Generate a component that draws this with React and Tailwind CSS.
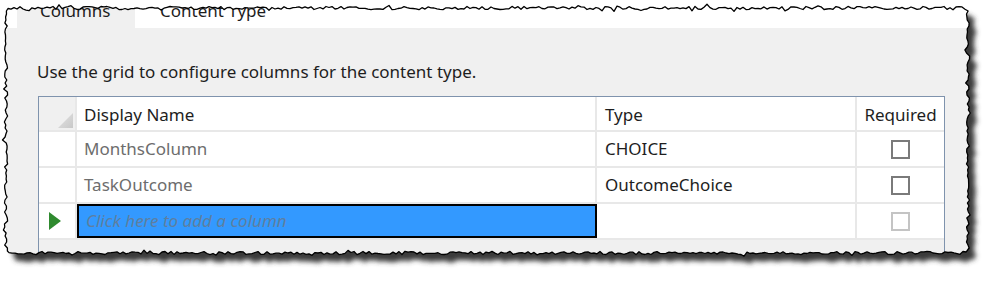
import React from "react";

function rng(seed) {
  let s = seed;
  return () => {
    s = (s * 1103515245 + 12345) & 0x7fffffff;
    return s / 0x7fffffff;
  };
}

function tornPath() {
  const r = rng(11);
  const j = (amp) => (r() - 0.5) * 2 * amp + (r() < 0.1 ? (r() - 0.5) * 5 : 0);
  const pts = [];
  for (let x = 8; x <= 966; x += 3) pts.push([x, 8 + j(1.6)]);
  for (let y = 11; y <= 251; y += 3) pts.push([968 + j(1.6), y]);
  for (let x = 966; x >= 9; x -= 3) pts.push([x, 253 + j(1.6)]);
  for (let y = 251; y >= 11; y -= 3) pts.push([6 + j(1.6), y]);
  return "M" + pts.map((p) => p[0].toFixed(1) + "," + p[1].toFixed(1)).join("L") + "Z";
}

const TORN = tornPath();

function Checkbox({ light }) {
  return (
    <div
      className={
        "w-[19px] h-[19px] border-2 bg-white " +
        (light ? "border-[#c4c4c4]" : "border-[#7a7a7a]")
      }
    />
  );
}

function Row({ name, type, isNew, light }) {
  return (
    <div className="flex h-[36px] border-b-2 border-[#e8e8e8]">
      <div className="w-[38px] bg-white border-r-2 border-[#e8e8e8] flex items-center pl-[10px]">
        {isNew && (
          <svg width="12" height="18" viewBox="0 0 12 18">
            <polygon points="0,0 12,9 0,18" fill="#2f8a2f" />
          </svg>
        )}
      </div>
      <div
        className={
          "w-[520px] flex items-center pl-[7px] border-r-2 " +
          (isNew
            ? "bg-[#3399ff] border-2 border-black"
            : "bg-white border-[#e8e8e8]")
        }
      >
        <span
          className={
            isNew
              ? "italic text-[#5e7f9f] leading-[22px]"
              : "text-[#6d6d6d] leading-[22px]"
          }
        >
          {name}
        </span>
      </div>
      <div className="w-[260px] bg-white flex items-center pl-[8px] border-r-2 border-[#e8e8e8] text-[#1e1e1e] leading-[22px]">
        {type}
      </div>
      <div className="flex-1 bg-white flex items-center justify-center">
        <Checkbox light={light} />
      </div>
    </div>
  );
}

export default function App() {
  return (
    <div
      className="relative w-[1000px] h-[286px] bg-white overflow-hidden text-[17px]"
      style={{ fontFamily: '"Noto Sans", "Open Sans", sans-serif' }}
    >
      <div className="ml-[6px] w-[963px] h-[258px] bg-[#f0f0f0] flex flex-col">
        <div className="h-[28px] flex bg-white">
          <div className="ml-[11px] w-[118px] bg-[#f0f0f0] pl-[23px] leading-[22px] text-[#1e1e1e]">
            Columns
          </div>
          <div className="ml-[25px] leading-[22px] text-[#1e1e1e]">
            Content Type
          </div>
        </div>
        <p className="mt-[33px] ml-[31px] leading-[22px] text-[#1e1e1e]">
          Use the grid to configure columns for the content type.
        </p>
        <div className="mt-[13px] ml-[32px] w-[907px] flex-1 border-t border-l border-r border-[#7f93ad] bg-[#f0f0f0]">
          <div className="flex h-[35px] border-b-2 border-[#e8e8e8]">
            <div className="w-[38px] bg-[#f0f0f0] border-r-2 border-[#e8e8e8] flex items-end justify-end pr-[2px] pb-[2px]">
              <svg width="15" height="15" viewBox="0 0 15 15">
                <defs>
                  <linearGradient id="tri" x1="0" y1="0" x2="1" y2="1">
                    <stop offset="0" stopColor="#e4e4e4" />
                    <stop offset="1" stopColor="#c8c8c8" />
                  </linearGradient>
                </defs>
                <polygon points="15,0 15,15 0,15" fill="url(#tri)" />
              </svg>
            </div>
            <div className="w-[520px] bg-white flex items-center pl-[7px] pt-[2px] border-r-2 border-[#e8e8e8] text-[#1e1e1e] leading-[22px]">
              Display Name
            </div>
            <div className="w-[260px] bg-white flex items-center pl-[8px] pt-[2px] border-r-2 border-[#e8e8e8] text-[#1e1e1e] leading-[22px]">
              Type
            </div>
            <div className="flex-1 bg-white flex items-center justify-center pt-[2px] text-[#1e1e1e] leading-[22px]">
              Required
            </div>
          </div>
          <Row name="MonthsColumn" type="CHOICE" />
          <Row name="TaskOutcome" type="OutcomeChoice" />
          <Row name="Click here to add a column" type="" isNew light />
        </div>
      </div>
      <svg
        className="absolute inset-0 pointer-events-none"
        width="1000"
        height="286"
        viewBox="0 0 1000 286"
      >
        <defs>
          <filter id="blur" x="-5%" y="-10%" width="110%" height="120%">
            <feGaussianBlur stdDeviation="2.6" />
          </filter>
          <clipPath id="outside">
            <path clipRule="evenodd" d={"M0,0H1000V286H0Z " + TORN} />
          </clipPath>
        </defs>
        <path d={"M0,0H1000V286H0Z " + TORN} fillRule="evenodd" fill="#ffffff" />
        <g clipPath="url(#outside)">
          <path d={TORN} transform="translate(7,8)" fill="#3a3a3a" filter="url(#blur)" />
        </g>
        <path d={TORN} fill="none" stroke="#000" strokeWidth="1.3" strokeLinejoin="round" />
      </svg>
    </div>
  );
}
